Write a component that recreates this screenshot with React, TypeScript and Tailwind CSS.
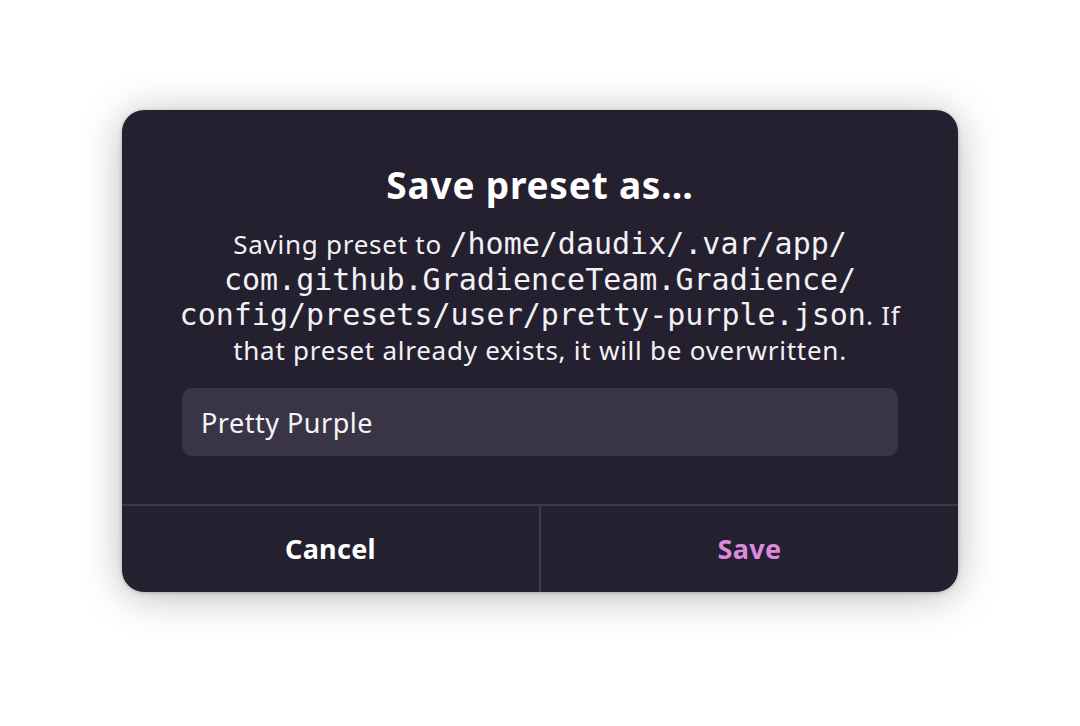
export default function App() {
  const mono = "font-['DejaVu_Sans_Mono',monospace] text-[30px] tracking-normal";
  return (
    <div className="flex h-[726px] w-full items-center justify-center bg-white pb-[24px] font-['Noto_Sans',sans-serif]">
      <div className="w-[836px] overflow-hidden rounded-[22px] bg-[#24202f] text-white shadow-[0_4px_40px_rgba(0,0,0,0.28),0_1px_4px_rgba(0,0,0,0.2)]">
        {/* Header and body */}
        <div className="flex flex-col items-center px-[60px] pt-[53px] pb-[48px]">
          <h1 className="text-[37px] leading-[44px] font-bold tracking-[0.8px]">Save preset as…</h1>
          <p className="mt-[19px] text-center text-[26px] leading-[35px] tracking-[0.75px] text-[#f2f1f4]">
            <span className="block">
              Saving preset to <span className={mono}>/home/daudix/.var/app/</span>
            </span>
            <span className={`block ${mono}`}>com.github.GradienceTeam.Gradience/</span>
            <span className="block whitespace-nowrap">
              <span className={mono}>config/presets/user/pretty-purple.json</span>. If
            </span>
            <span className="block">that preset already exists, it will be overwritten.</span>
          </p>
          <input
            defaultValue="Pretty Purple"
            className="mt-[20px] h-[68px] w-full rounded-[10px] bg-[#3a3546] px-[19px] text-[27px] tracking-[0.5px] text-[#f5f4f7] outline-none"
          />
        </div>

        {/* Buttons */}
        <div className="flex border-t-2 border-[#3f3a4b]">
          <button className="h-[86px] flex-1 text-[27px] font-bold tracking-[0.3px] text-white">Cancel</button>
          <div className="w-[2px] bg-[#3f3a4b]" />
          <button className="h-[86px] flex-1 text-[27px] font-bold tracking-[0.3px] text-[#dc8add]">Save</button>
        </div>
      </div>
    </div>
  );
}
